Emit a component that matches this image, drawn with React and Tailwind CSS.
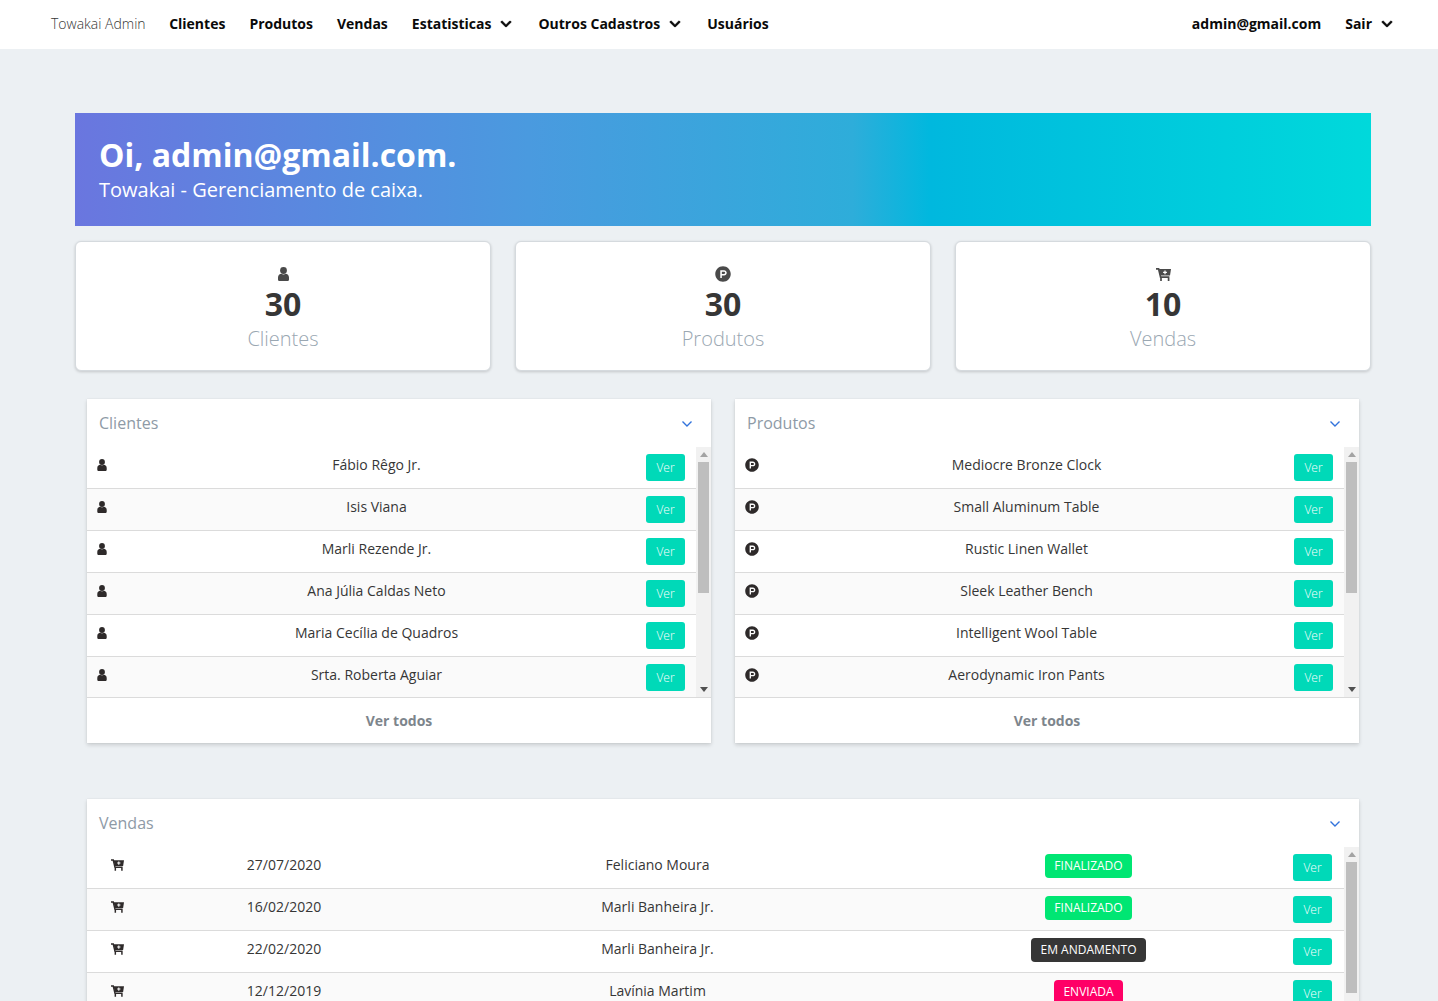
import React from 'react';
import { FaProductHunt, FaChevronDown } from 'react-icons/fa';

const clientes = ['Fábio Rêgo Jr.', 'Isis Viana', 'Marli Rezende Jr.', 'Ana Júlia Caldas Neto', 'Maria Cecília de Quadros', 'Srta. Roberta Aguiar'];
const produtos = ['Mediocre Bronze Clock', 'Small Aluminum Table', 'Rustic Linen Wallet', 'Sleek Leather Bench', 'Intelligent Wool Table', 'Aerodynamic Iron Pants'];
const vendas = [
    { date: '27/07/2020', name: 'Feliciano Moura', status: 'FINALIZADO', color: 'bg-[#00e673]' },
    { date: '16/02/2020', name: 'Marli Banheira Jr.', status: 'FINALIZADO', color: 'bg-[#00e673]' },
    { date: '22/02/2020', name: 'Marli Banheira Jr.', status: 'EM ANDAMENTO', color: 'bg-[#363636]' },
    { date: '12/12/2019', name: 'Lavínia Martim', status: 'ENVIADA', color: 'bg-[#ff0066]' },
];

const UserIcon = ({ width, height }) => (
    <svg width={width} height={height} viewBox="0 0 11 14" fill="currentColor">
        <circle cx="5.5" cy="3.5" r="3.4" />
        <path d="M0 12.4V10.4C0 8.3 1.6 7 3.4 6.8C4.6 7.6 6.4 7.6 7.6 6.8C9.4 7 11 8.3 11 10.4V12.4C11 13.4 10.2 14 9.4 14H1.6C0.8 14 0 13.4 0 12.4Z" />
    </svg>
);

const CartIcon = ({ width, height }) => (
    <svg width={width} height={height} viewBox="0 0 15 13" fill="none">
        <path d="M0 0.8H2.6L4.6 9.2H13.4M5 9.2V13M12.6 9.2V13" stroke="currentColor" strokeWidth="1.7" />
        <path d="M3 1H15L14 7.6H4.4Z" fill="currentColor" />
        <path d="M9 2.4V6.2M7.1 4.3H10.9" stroke="#ffffff" strokeWidth="1.2" />
    </svg>
);

const NavItem = ({ children, dropdown }) => (
    <a className="flex items-center text-sm font-bold text-[#0a0a0a] whitespace-nowrap">
        {children}
        {dropdown && <FaChevronDown className="ml-[9px] mr-[2px] text-[12px]" stroke="currentColor" strokeWidth="24" />}
    </a>
);

const StatCard = ({ icon, value, label }) => (
    <div className="flex-1 h-[130px] bg-white rounded-md border border-[#d5dade] shadow-[0_1px_3px_rgba(10,10,10,0.18)] flex flex-col items-center pt-[24px]">
        <div className="h-4 flex items-center text-[#4a4a4a] text-[16px]">{icon}</div>
        <p className="text-[32px] leading-[40px] mt-[2px] font-bold text-[#363636]">{value}</p>
        <p className="text-[20px] leading-[30px] font-light text-[#9aa7b2]">{label}</p>
    </div>
);

const Ver = () => (
    <button className="w-[39px] h-[27px] bg-[#00d9b8] rounded-[3px] text-white text-xs font-light flex items-center justify-center">Ver</button>
);

const FakeScrollbar = () => (
    <div className="w-[15px] shrink-0 bg-[#f1f1f1] flex flex-col items-center">
        <svg width="8" height="5" viewBox="0 0 8 5" className="mt-[5px] shrink-0"><polygon points="4,0 8,5 0,5" fill="#a3a3a3" /></svg>
        <div className="w-[11px] h-[131px] mt-[5px] bg-[#bebebe]"></div>
        <svg width="8" height="5" viewBox="0 0 8 5" className="mt-auto mb-[5px] shrink-0"><polygon points="0,0 8,0 4,5" fill="#505050" /></svg>
    </div>
);

const PanelHeader = ({ title }) => (
    <div className="h-12 flex items-center justify-between pl-3 pr-[18px]">
        <span className="text-base text-[#8e9aa6]">{title}</span>
        <svg width="12" height="8" viewBox="0 0 12 8" fill="none" stroke="#3273dc" strokeWidth="1.4" className="mt-px">
            <polyline points="1.5,1.5 6,6 10.5,1.5" />
        </svg>
    </div>
);

const ListPanel = ({ title, items, icon, iconTop, cols }) => (
    <div className="flex-1 bg-white shadow-[0_2px_4px_rgba(10,10,10,0.15),0_0_1px_rgba(10,10,10,0.1)]">
        <PanelHeader title={title} />
        <div className="flex h-[250px] overflow-hidden">
            <div className="flex-1 min-w-0">
                {items.map((item, i) => (
                    <div
                        key={item}
                        className={`h-[42px] grid ${cols} text-sm text-[#363636] border-b border-[#dbdbdb] last:border-b-0 ${i % 2 === 1 ? 'bg-[#fafafa]' : 'bg-white'}`}
                    >
                        <div className={`pl-[10px] ${iconTop} text-[#2e2a2a]`}>{icon}</div>
                        <div className="text-center pt-[7px] leading-[21px]">{item}</div>
                        <div className="pl-3 pt-[7px]"><Ver /></div>
                    </div>
                ))}
            </div>
            <FakeScrollbar />
        </div>
        <div className="h-[46px] border-t border-[#dbdbdb] flex items-center justify-center text-sm font-bold text-[#7d858c]">Ver todos</div>
    </div>
);

const App = () => {
    return (
        <div className="h-[1001px] overflow-hidden bg-[#ecf0f3] font-['Open_Sans',sans-serif]">
            {/* Navbar */}
            <nav className="h-[49px] bg-white flex items-center justify-between pl-[51px] pr-[43px] pb-[2px]">
                <div className="flex items-center gap-6">
                    <a className="text-sm font-light text-[#363636] -mr-[0.5px]">Towakai Admin</a>
                    <NavItem>Clientes</NavItem>
                    <NavItem>Produtos</NavItem>
                    <NavItem>Vendas</NavItem>
                    <NavItem dropdown>Estatisticas</NavItem>
                    <NavItem dropdown>Outros Cadastros</NavItem>
                    <NavItem>Usuários</NavItem>
                </div>
                <div className="flex items-center gap-6">
                    <NavItem>admin@gmail.com</NavItem>
                    <NavItem dropdown>Sair</NavItem>
                </div>
            </nav>

            <main className="pt-16 pl-[75px] pr-[67px]">
                {/* Hero */}
                <section className="h-[113px] pl-6 pt-[21px] bg-[linear-gradient(90deg,#6a76df_0%,#4a9adf_35%,#2eadda_60%,#00b8de_66%,#00d9db_100%)] text-white">
                    <h1 className="text-[32px] leading-[42px] font-bold">Oi, admin@gmail.com.</h1>
                    <h2 className="text-[20px] leading-[28px]">Towakai - Gerenciamento de caixa.</h2>
                </section>

                {/* Stats */}
                <div className="flex gap-6 mt-[15px]">
                    <StatCard icon={<UserIcon width={11} height={14} />} value="30" label="Clientes" />
                    <StatCard icon={<FaProductHunt />} value="30" label="Produtos" />
                    <StatCard icon={<CartIcon width={15} height={13} />} value="10" label="Vendas" />
                </div>

                {/* Clientes and Produtos */}
                <div className="flex gap-6 mt-7 mx-3">
                    <ListPanel title="Clientes" items={clientes} cols="grid-cols-[32px_1fr_62px]" iconTop="pt-[12px]" icon={<UserIcon width={10} height={12} />} />
                    <ListPanel title="Produtos" items={produtos} cols="grid-cols-[36px_1fr_62px]" iconTop="pt-[11px]" icon={<FaProductHunt />} />
                </div>

                {/* Vendas */}
                <div className="mt-14 mx-3 bg-white shadow-[0_2px_4px_rgba(10,10,10,0.15),0_0_1px_rgba(10,10,10,0.1)]">
                    <PanelHeader title="Vendas" />
                    <div className="flex h-[250px] overflow-hidden">
                        <div className="flex-1 min-w-0">
                            {vendas.map((venda, i) => (
                                <div
                                    key={venda.date}
                                    className={`h-[42px] grid grid-cols-[62px_270px_477px_385px_1fr] text-sm text-[#363636] border-b border-[#dbdbdb] ${i % 2 === 1 ? 'bg-[#fafafa]' : 'bg-white'}`}
                                >
                                    <div className="pl-[24px] pt-[12px] text-[#2e2a2a]"><CartIcon width={13} height={12} /></div>
                                    <div className="text-center pt-[7px] leading-[21px]">{venda.date}</div>
                                    <div className="text-center pt-[7px] leading-[21px]">{venda.name}</div>
                                    <div className="flex justify-center pt-[7px]">
                                        <span className={`h-6 px-[9.5px] rounded text-xs text-white flex items-center ${venda.color}`}>{venda.status}</span>
                                    </div>
                                    <div className="pl-3 pt-[7px]"><Ver /></div>
                                </div>
                            ))}
                        </div>
                        <FakeScrollbar />
                    </div>
                </div>
            </main>
        </div>
    );
};

export default App;
